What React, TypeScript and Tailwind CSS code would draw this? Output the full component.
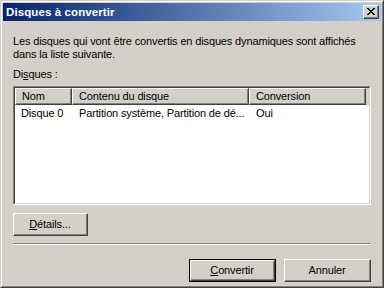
import React from "react";

const font = { fontFamily: '"Liberation Sans", Arial, sans-serif' };

function CloseButton() {
    return (
        <div className="w-[16px] h-[14px] mr-[2px] bg-[#d4d0c8] border-t border-l border-t-white border-l-white border-r border-b border-r-[#404040] border-b-[#404040] flex">
            <div className="flex-1 border-r border-b border-r-[#808080] border-b-[#808080] flex items-center justify-center">
                <svg width="8" height="7" viewBox="0 0 8 7" shapeRendering="crispEdges">
                    <path d="M0 0h2v1h-2zM6 0h2v1h-2zM1 1h2v1h-2zM5 1h2v1h-2zM2 2h4v1h-4zM3 3h2v1h-2zM2 4h4v1h-4zM1 5h2v1h-2zM5 5h2v1h-2zM0 6h2v1h-2zM6 6h2v1h-2z" fill="#000" />
                </svg>
            </div>
        </div>
    );
}

function Button({ children, isDefault, className }: { children: React.ReactNode; isDefault?: boolean; className?: string }) {
    const inner = (
        <div className="flex-1 flex border-t border-l border-t-white border-l-white border-r border-b border-r-[#404040] border-b-[#404040]">
            <div className="flex-1 flex items-center justify-center border-r border-b border-r-[#808080] border-b-[#808080] text-[11px] text-black">
                {children}
            </div>
        </div>
    );
    return (
        <div className={"h-[23px] flex bg-[#d4d0c8] " + (isDefault ? "border border-black " : "") + (className || "")}>
            {inner}
        </div>
    );
}

function HeaderCell({ label, width }: { label: string; width: string }) {
    return (
        <div className={"h-full flex border-t border-l border-t-white border-l-white border-r border-b border-r-[#404040] border-b-[#404040] " + width}>
            <div className="flex-1 flex items-center pl-[6px] border-r border-b border-r-[#808080] border-b-[#808080]">{label}</div>
        </div>
    );
}

export default function App() {
    return (
        <div className="w-[384px] h-[288px] bg-[#d4d0c8] text-[11px] text-black leading-[13px]" style={font}>
            {/* window frame */}
            <div className="w-full h-full flex border-t border-l border-t-[#d4d0c8] border-l-[#d4d0c8] border-r border-b border-r-[#404040] border-b-[#404040]">
                <div className="flex-1 flex border-t border-l border-t-white border-l-white border-r border-b border-r-[#808080] border-b-[#808080]">
                    <div className="flex-1 flex flex-col p-px">
                        {/* title bar */}
                        <div className="h-[18px] flex items-center bg-linear-to-r from-[#0a246a] to-[#a6caf0]">
                            <span className="flex-1 pl-[3px] text-white font-bold text-[11.5px] tracking-[0.1px]">Disques à convertir</span>
                            <CloseButton />
                        </div>

                        <div className="flex-1 flex flex-col px-[10px] tracking-[-0.14px]">
                            <p className="mt-[14px]">
                                Les disques qui vont être convertis en disques dynamiques sont affichés
                                <br />
                                dans la liste suivante.
                            </p>
                            <p className="mt-[7px]">
                                Di<span className="underline">s</span>ques :
                            </p>

                            {/* list view */}
                            <div className="mt-[5px] h-[119px] flex border-t border-l border-t-[#808080] border-l-[#808080] border-r border-b border-r-white border-b-white">
                                <div className="flex-1 flex flex-col bg-white border-t border-l border-t-[#404040] border-l-[#404040] border-r border-b border-r-[#d4d0c8] border-b-[#d4d0c8]">
                                    <div className="h-[17px] flex bg-[#d4d0c8]">
                                        <HeaderCell label="Nom" width="w-[57px]" />
                                        <HeaderCell label="Contenu du disque" width="w-[177px]" />
                                        <HeaderCell label="Conversion" width="w-[117px]" />
                                    </div>
                                    <div className="h-[16px] flex items-center">
                                        <span className="w-[57px] pl-[6px]">Disque 0</span>
                                        <span className="w-[177px] pl-[7px]">Partition système, Partition de dé...</span>
                                        <span className="pl-[7px]">Oui</span>
                                    </div>
                                </div>
                            </div>

                            <Button className="mt-[8px] w-[75px]">
                                <span><span className="underline">D</span>étails...</span>
                            </Button>

                            <div className="mt-[7px] mr-[1px] border-t border-t-[#808080] border-b border-b-white" />

                            <div className="mt-[14px] flex justify-end gap-[8px]">
                                <Button isDefault className="w-[87px]">
                                    <span><span className="underline">C</span>onvertir</span>
                                </Button>
                                <Button className="w-[87px]">Annuler</Button>
                            </div>
                        </div>
                    </div>
                </div>
            </div>
        </div>
    );
}
